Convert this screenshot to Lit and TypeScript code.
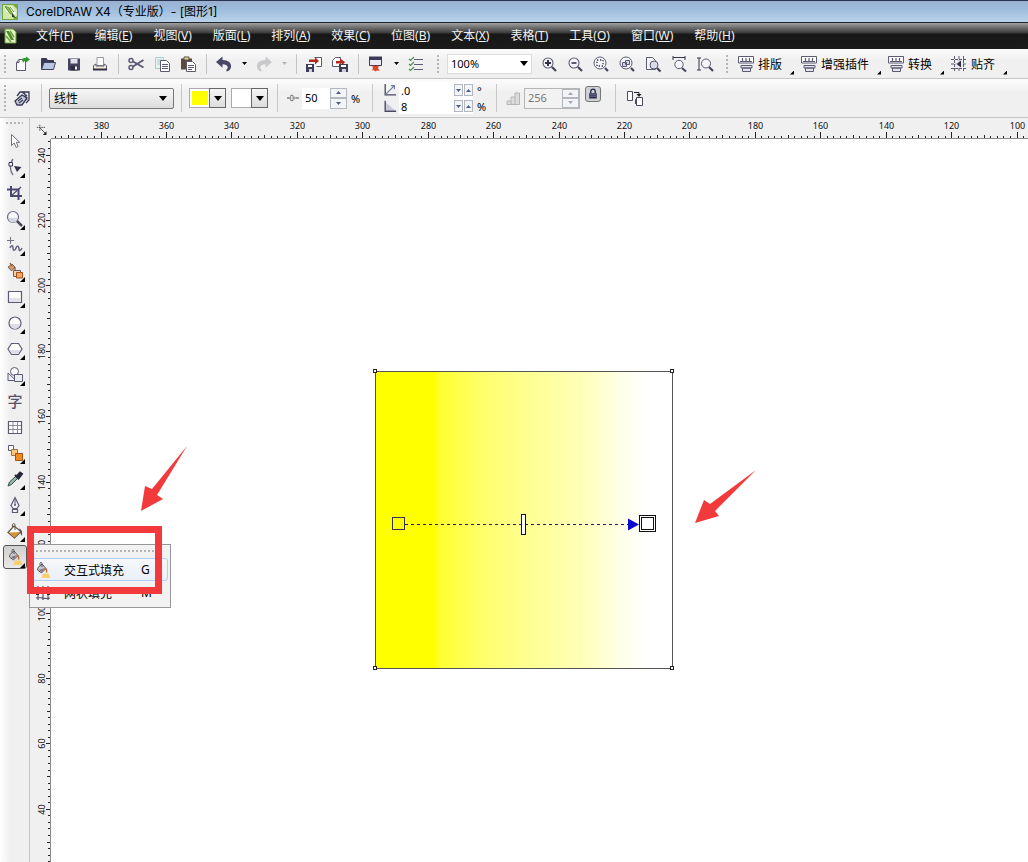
import { LitElement, html, css, svg, TemplateResult } from "lit";
import { customElement } from "lit/decorators.js";
import { classMap } from "lit/directives/class-map.js";

const INK = "#5d5b74";
const DARK = "#33324a";

const lens = svg`<circle cx="7" cy="7" r="5" fill="#f4f5fa" stroke=${INK} stroke-width="1.1"/><path d="M11 11l4 4" stroke="#45435c" stroke-width="2.2"/>`;
const caliper = svg`<path d="M.5 .5h15v6.500H.5z" fill="#fff" stroke=${INK}/><path d="M2 5.500h12M4.500 2v3M8 2v3M11.500 2v3" stroke=${INK} stroke-width="1.200"/><path d="M3 9.500h11v2.500H3zM4.500 12h8v3.500h-8z" fill="#e4e3ee" stroke=${INK}/>`;
const pour = svg`<path d="M3 5.500L7 2l4 4.500L6.500 11 2.500 8z" fill="#c9c7cc" stroke="#5b5560"/><path d="M4 8l6-2-3.500 4z" fill="#77737d"/><path d="M5 3.500V1.500c0-1.500 2-1.500 2 0V5" stroke="#5b5560" fill="none"/><path d="M9.500 7c2-.5 2.500 1 2 3.500" stroke="#c4682a" stroke-width="1.500" fill="none"/><path d="M8 11.500h5.500l2 4.500H6.500z" fill="#fbcf6d"/>`;

const icons: Record<string, TemplateResult> = {
  logo: svg`<path d="M0 0h16v16H0z" fill="#6fa83a"/><path d="M1 1h10l4 4v7l-4 3H1z" fill="#d5e8ac"/><path d="M2 2l8 1 4 7-4 1-6-4z" fill="#fff"/><path d="M3 2.500l4 1 4 7-3-1zM8 3l4 5" stroke="#5b9b2b" fill="#8cc056"/><path d="M10 9l4 5-4-1z" fill="#24421a"/>`,
  doclogo: svg`<path d="M3 1h8l3 3v11H3z" fill="#e3f0c6" stroke="#6d9c3b"/><path d="M4 3l3 0 5 9-3 0z" fill="#4c8a2b"/><path d="M8 3l4 6M4 8l5 6" stroke="#6ba537" stroke-width="1.500"/>`,
  new: svg`<path d="M2.500 6.500L5 3.500h6.500v11h-9z" fill="#fbfbfd" stroke=${INK}/><path d="M2.500 6.500H5v-3" fill="none" stroke=${INK}/><path d="M8 4.500c0-2 1-2.500 4-2.500V.5L16 3.500 12 6.500V5c-2 0-2.500.5-2.500 2z" fill="#2f9a2c"/>`,
  open: svg`<path d="M1.500 13.500v-11h5l1 2h6v2" fill="#3a3854" stroke="#3a3854"/><path d="M1.500 13.500l2.500-7h11.500l-2 7z" fill="#b9c8e0" stroke="#3f4263"/>`,
  save: svg`<path d="M2 2.500h12v12H2z" fill="#45435f"/><path d="M4.500 3h7v4.500h-7z" fill="#dfe2ee"/><path d="M4.500 10h7v4.500h-7z" fill="#2c2a40"/><path d="M9 10.500h2v3H9z" fill="#fff"/>`,
  print: svg`<path d="M5 1.500h6.500v8H5z" fill="#fff" stroke="#9a9aa6"/><path d="M1.500 9.500L4 8v2h8V8l2.500 1.500v4h-13z" fill="#f2ead0" stroke=${INK}/><path d="M1 13.500h14" stroke="#33324a" stroke-width="2"/>`,
  cut: svg`<circle cx="3" cy="4.500" r="2" fill="none" stroke=${INK} stroke-width="1.500"/><circle cx="3" cy="11.500" r="2" fill="none" stroke=${INK} stroke-width="1.500"/><path d="M5 5.500l10.500 6M5 10.500l10.500-6.500" stroke=${INK} stroke-width="2"/>`,
  copy: svg`<path d="M1.500 1.500h8v11h-8z" fill="#e6f3f1" stroke="#a8cfcb"/><path d="M3 4h5M3 6h5M3 8h5" stroke="#a8cfcb"/><path d="M6.500 4.500h6l3 3v8h-9z" fill="#fff" stroke=${INK}/><path d="M8 8.500h6M8 10.500h6M8 12.500h6" stroke=${INK}/>`,
  paste: svg`<path d="M1 2.500h11v11H1z" fill="#5c4a3c"/><path d="M4 1h5v3H4z" fill="#e6d9a8" stroke="#5c4a3c"/><path d="M6.500 5.500h6l3 3v7h-9z" fill="#fff" stroke=${INK}/><path d="M8 9.500h6M8 11.500h6M8 13.500h4" stroke=${INK}/>`,
  undo: svg`<path d="M0 6l6.500-5.500V4c6 0 9 3 8.500 7-.300 2.500-2 4-4.500 4.500v-2c2-1 2.200-5-4-5.200v3.400z" fill="#48476a"/>`,
  redo: svg`<path d="M16 6L9.500 .5V4C3.500 4 .5 7 1 11c.300 2.500 2 4 4.500 4.500v-2c-2-1-2.200-5 4-5.200v3.400z" fill="#c9c9cc"/>`,
  import: svg`<path d="M8.500 1.500h7v9h-5" fill="#fff" stroke=${INK}/><path d="M3 5V3.500h6V1l4 4-4 3.500V6H3z" fill="#b5281e"/><path d="M0 8h8v8H0z" fill="#3f3d58"/><path d="M2 9h4v2H2z" fill="#fff"/><path d="M3 13h3v3H3z" fill="#cfd0dd"/>`,
  export: svg`<path d="M.5 4.500l3-3h5v9h-8z" fill="#fff" stroke=${INK}/><path d="M4 5h4V2.500L13 6l-3 4V7.500H4z" fill="#b5281e"/><path d="M7 8h9v8H7z" fill="#3f3d58"/><path d="M9 9h5v2H9z" fill="#fff"/><path d="M10 13h4v3h-4z" fill="#cfd0dd"/>`,
  launch: svg`<path d="M1.500 1.500h12v8h-12z" fill="#e9eaf2" stroke="#3c3a5a"/><path d="M1 .5h13v3.500H1z" fill="#3c3a5a"/><path d="M4 9.500l3.500.5 3.500-.5-1 2.500 1.500 3-2.500-.5-2 1-1-1.500-2 .5 1-2.500z" fill="#dd4526"/>`,
  checklist: svg`<path d="M6 3.500h9M6 8.500h9M6 13.500h9" stroke=${INK} stroke-width="1.200"/><path d="M1 3l1.500 1.500L6 1M1 8l1.500 1.500L6 6M1 13l1.500 1.500L6 11" stroke="#4d9150" stroke-width="1.200" fill="none"/>`,
  zoomin: svg`${lens}<path d="M4 7h6M7 4v6" stroke="#33324a" stroke-width="2"/>`,
  zoomout: svg`${lens}<path d="M4.500 7h5" stroke=${INK} stroke-width="2"/>`,
  zoomsel: svg`<circle cx="7" cy="7" r="6" fill="#f4f5fa" stroke=${INK}/><path d="M12 12l3 3" stroke="#45435c" stroke-width="2.200"/><rect x="4" y="4" width="6" height="6" fill="none" stroke="#33324a" stroke-width="1.300" stroke-dasharray="1.300 1.700"/>`,
  zoomall: svg`<circle cx="7" cy="7" r="6" fill="#f4f5fa" stroke=${INK}/><path d="M12 12l3 3" stroke="#45435c" stroke-width="2.200"/><path d="M3.500 6.500h4v4h-4zM6.500 4.500h4v4h-4z" fill="#d5d6e6" stroke=${INK}/>`,
  zoompage: svg`<path d="M1.500 1.500h6l3 3v9h-9z" fill="#f4f5fa" stroke=${INK}/><circle cx="9" cy="9" r="4" fill="#d9dbe8" stroke=${INK}/><path d="M12 12l3.500 3.500" stroke="#45435c" stroke-width="2.200"/>`,
  zoomwidth: svg`<path d="M2 1.500h12M2 0v4M14 0v4" stroke="#33324a"/><circle cx="8" cy="8.500" r="4.200" fill="#f4f5fa" stroke=${INK}/><path d="M11 12l4 3.500" stroke="#45435c" stroke-width="2"/>`,
  zoomheight: svg`<path d="M2 2v12M0 2h4M0 14h4" stroke="#33324a"/><circle cx="9" cy="7.500" r="4.500" fill="#f4f5fa" stroke=${INK}/><path d="M12 11l4 4" stroke="#45435c" stroke-width="2.200"/>`,
  caliper,
  snap: svg`<path d="M0 3.500h16M0 8h16M0 12.500h16M3.500 0v16M12.500 0v16M8 0v16" stroke="#5d5b74" stroke-dasharray="3 1"/><path d="M4.500 4.500h7v7h-7z" fill="#e8e8f1"/><path d="M10 4.500v7L5.500 8z" fill="#33324a"/>`,
  fillprops: svg`<path d="M3 6l3-4h9v8l-3 3" fill="#e6e7f1" stroke="#3b3a55" stroke-width="1.300"/><path d="M1 11l7-6 5 3-5 7H3z" fill="#c6c9dc" stroke="#3b3a55" stroke-width="1.300"/><path d="M4 11l4-3M5 13l4-3M8 2l5 4M10 2l3 8" stroke="#3b3a55" stroke-width="1.100"/>`,
  mid: svg`<path d="M0 8h4M11 8h5" stroke="#444" stroke-width="1.300"/><path d="M5 4.500h3v7H5zM9.500 6v4" stroke="#555" fill="#fff"/>`,
  angle: svg`<path d="M2.500 1v12.500H15" stroke="#4a4960" fill="none" stroke-width="1.500"/><path d="M3 13L13 3M13 7V3H9" stroke="#6a7a9a" fill="none" stroke-width="1.300"/>`,
  pad: svg`<path d="M2 3l12 10H2z" fill="#c9c9da"/><path d="M2.500 2v12H15" stroke="#4a4960" fill="none" stroke-width="1.500"/>`,
  steps: svg`<path d="M2 14.500V11h4V7h4V3h4.500v11.500z" fill="#dcdcdc" stroke="#b5b5b5"/><path d="M6 11v3M10 7v7" stroke="#b5b5b5"/>`,
  lock: svg`<path d="M5 7V4.500a3 3 0 0 1 6 0V7" fill="none" stroke="#2b2a48" stroke-width="1.800"/><path d="M3 7h10v7H3z" fill="#2b2a48"/><path d="M4 9h8M4 11h8" stroke="#8584a6"/>`,
  copyfill: svg`<path d="M.5 1.500h5v9h-5zM9.500 7.500h6v8h-6z" fill="#fff" stroke="#4a4960"/><path d="M7 2.500h5v3" fill="none" stroke="#222"/><path d="M9.500 4h5L12 7z" fill="#222"/><path d="M8.500 14v-4.500h1" stroke="#4a4960" fill="none"/>`,
  origin: svg`<path d="M5 1v9M1 4.500h12" stroke="#222" stroke-dasharray="2 1"/><path d="M5 5l7 7" stroke="#222"/><path d="M14 9.500v5H9z" fill="#222"/>`,
  pick: svg`<path d="M4.500 1.500v11l2.700-2.500 2 4.500 2-1-2-4.200h3.500z" fill="#fff" stroke="#74727f"/>`,
  shape: svg`<path d="M6 0C2 5 3 12 6 16" fill="none" stroke="#77758c" stroke-width="1.300"/><path d="M2 3.500h3.500V7H2z" fill="#fff" stroke=${DARK}/><path d="M7 7l7.500 1-4.500 5z" fill="#33324a"/>`,
  crop: svg`<path d="M4 1v10h11M0 4.500h11.500V15" fill="none" stroke="#4a4870" stroke-width="2"/><path d="M4 11L14 2" stroke="#4a4870" stroke-width="1.200"/>`,
  zoom: svg`<circle cx="6" cy="6" r="5.500" fill="#f6f7fb" stroke="#6b6980" stroke-width="1.200"/><path d="M1.500 7h9a4.500 4.500 0 0 1-9 0z" fill="#d3d5e2"/><path d="M10 10l5 5" stroke="#4c4a5e" stroke-width="2.500"/>`,
  freehand: svg`<path d="M3.500 0v7M0 3.500h7" stroke="#74727f"/><path d="M3 11c1-3 3-3 3 0s2 3 3 0 3-2 3 1 2 1 3-1" fill="none" stroke="#615f78" stroke-width="1.400"/>`,
  smart: svg`<path d="M1 4l4-3 3 3-3.500 4z" fill="#d69563" stroke="#7c6659"/><path d="M3 0l2 3M8 4v3" stroke="#8a5a38" stroke-width="1.300"/><path d="M6.500 7.500h7v6h-7z" fill="#f6d0a6" stroke=${INK}/><path d="M9.500 9.500h6v5.500h-6z" fill="#f7a75c" stroke="#a34f1d"/>`,
  rect: svg`<path d="M1.500 2.500h13v11h-13z" fill="#fdfdfe" stroke=${INK} stroke-width="1.200"/><path d="M2 9h12v4H2z" fill="#e1e2ec"/>`,
  ellipse: svg`<circle cx="8" cy="8" r="6" fill="#fdfdfe" stroke=${INK} stroke-width="1.200"/><path d="M3 9h10a5 5 0 0 1-10 0z" fill="#dcdde9"/>`,
  polygon: svg`<path d="M4.500 2.500h7L15 8l-3.500 5.500h-7L1 8z" fill="#fdfdfe" stroke=${INK} stroke-width="1.200"/><path d="M2.500 9h11l-2.300 3.800H4.800z" fill="#dcdde9"/>`,
  basic: svg`<path d="M1 6l8 7.500H1z" fill="#eceef5" stroke=${INK}/><circle cx="7.500" cy="4.500" r="4" fill="#f9f9fc" stroke=${INK}/><path d="M7.500 7.500h8v7h-8z" fill="#eceef5" stroke=${INK}/>`,
  table: svg`<path d="M1.500 2.500h13v12h-13z" fill="#fff" stroke=${INK} stroke-width="1.200"/><path d="M2 6.500h12M2 10.500h12M6 3v11M10.500 3v11" stroke="#8b8aa0"/>`,
  blend: svg`<path d="M1.500 .5h5v5h-5z" fill="#fff" stroke=${INK}/><path d="M4.500 4.500h6v6h-6z" fill="#fbc879" stroke="#9c7546"/><path d="M8.500 8.500h7v7h-7z" fill="#f28a1c" stroke="#a05313"/>`,
  dropper: svg`<path d="M1 15l1.500-4L9 5l2 2-6.500 6.500z" fill="#93b3a6" stroke="#33504a"/><path d="M8 4l4 4M9.500 5.500L13 1.500l2 1.500-3.500 4.500z" stroke="#26253a" stroke-width="2" fill="#26253a"/>`,
  outline: svg`<path d="M8 .5l4 8-2 3H6l-2-3zM5.500 12.500h5v3h-5z" fill="#f2f3f8" stroke=${INK} stroke-width="1.200"/><path d="M8 2v6" stroke=${INK}/><circle cx="8" cy="8" r="1" fill=${INK}/>`,
  fill: svg`<path d="M1 9.500L7 3l7 5.500L7.500 15z" fill="#fff" stroke="#5d5548" stroke-width="1.200"/><path d="M2 9.500l11-.5-5.500 5.500z" fill="#d9942f"/><path d="M5.500 4.500V2c0-2 2.500-2 2.500 0v5" stroke="#5d5548" fill="none"/><path d="M12 5.500c3 1 3.500 4 3 7.500-2-2-2-5-3-7.500z" fill="#55505c"/>`,
  ifill: pour,
  mesh: svg`<path d="M1 3c4-2 8 2 14 0M1 8c4-2 8 2 14 0M1 13c4-2 8 2 14 0M3 1v14M8 1v14M13 1v14" fill="none" stroke="#55546a" stroke-width="1.200"/><path d="M1 7h3v3H1zM7 6h3v3H7zM12 7h3v3h-3z" fill="#333"/>`,
};

const icon = (name: string) =>
  html`<svg class="icon" viewBox="0 0 16 16" aria-hidden="true">${icons[name]}</svg>`;

const baseStyles = css`
  * { box-sizing: border-box; }
  button, select, input {
    font: inherit; color: inherit; margin: 0; padding: 0; border: 0;
    background: none; border-radius: 0; outline: 0; min-width: 0;
  }
  .icon { width: 16px; height: 16px; display: block; flex: none; overflow: visible; }
  .grip { flex: none; background: repeating-linear-gradient(#b4b4b4 0 2px, transparent 2px 4px) center / 2px 100% no-repeat; }
`;

@customElement("menu-bar")
export class MenuBar extends LitElement {
  static styles = [baseStyles, css`
    :host { display: block; color: #f2f2f2; }
    .bar { display: flex; align-items: center; height: 26px; padding-left: 2px; background: linear-gradient(#a0a0a0, #6a6a6a 5px, #3a3a3a 10px, #171717 11px, #1b1b1b); }
    .list { display: flex; gap: 1px; margin-left: 8px; }
    .entry { padding: 0 10px; font-size: 12px; line-height: 20px; white-space: nowrap; }
    .key { text-decoration: underline; }
  `];
  private entries = [
    ["文件", "F"], ["编辑", "E"], ["视图", "V"], ["版面", "L"], ["排列", "A"], ["效果", "C"],
    ["位图", "B"], ["文本", "X"], ["表格", "T"], ["工具", "O"], ["窗口", "W"], ["帮助", "H"],
  ];
  render() {
    return html`<nav class="bar">${icon("doclogo")}
      <div class="list">${this.entries.map(([t, k]) => html`<button class="entry">${t}(<span class="key">${k}</span>)</button>`)}</div>
    </nav>`;
  }
}

@customElement("standard-bar")
export class StandardBar extends LitElement {
  static styles = [baseStyles, css`
    :host { display: block; overflow: hidden; }
    .bar { display: flex; align-items: center; height: 30px; border-bottom: 1px solid #c6c6c6; background: linear-gradient(#fbfbfb, #f0f0f0 12px, #f0f0f0); }
    .grip { width: 9px; height: 18px; }
    .grip.mid { width: 18px; }
    .sep { width: 10px; height: 20px; flex: none; background: linear-gradient(#c4c4c4, #c4c4c4) 5px 0 / 1px 100% no-repeat; }
    .tool { width: 26px; height: 26px; display: grid; place-items: center; flex: none; }
    .drop { width: 14px; height: 26px; display: grid; place-items: center; flex: none; }
    .drop svg { width: 5px; height: 3px; display: block; }
    .drop.off { color: #b5b5b5; }
    .zoom { display: grid; grid-template-columns: 1fr 16px; align-items: center; width: 85px; height: 20px; margin-right: 4px; background: #fff; border: 1px solid #dcdcdc; font-size: 11px; }
    .zoom select { grid-area: 1 / 1 / 2 / 3; appearance: none; padding-left: 3px; height: 18px; }
    .zoom svg { grid-area: 1 / 2; justify-self: end; margin-right: 3px; width: 8px; height: 5px; pointer-events: none; }
    .text { position: relative; display: flex; align-items: center; gap: 4px; height: 26px; padding: 0 17px 0 2px; font-size: 12px; white-space: nowrap; }
    .text::after { content: ""; position: absolute; right: 5px; bottom: 2px; width: 4px; height: 4px; background: #000; clip-path: polygon(100% 0, 100% 100%, 0 100%); }
  `];
  private tools(list: [string, string][]) {
    return list.map(([n, l]) => html`<button class="tool" aria-label=${l}>${icon(n)}</button>`);
  }
  private drop(label: string, off = false) {
    return html`<button class=${classMap({ drop: true, off })} aria-label=${label}><svg viewBox="0 0 5 3"><path d="M0 0h5L2.500 3z" fill="currentColor"/></svg></button>`;
  }
  render() {
    return html`<div class="bar">
      <span class="grip"></span>
      ${this.tools([["new", "新建"], ["open", "打开"], ["save", "保存"], ["print", "打印"]])}
      <span class="sep"></span>
      ${this.tools([["cut", "剪切"], ["copy", "复制"], ["paste", "粘贴"]])}
      <span class="sep"></span>
      ${this.tools([["undo", "撤消"]])}${this.drop("撤消列表")}
      ${this.tools([["redo", "重做"]])}${this.drop("重做列表", true)}
      <span class="sep"></span>
      ${this.tools([["import", "导入"], ["export", "导出"]])}
      <span class="sep"></span>
      ${this.tools([["launch", "应用程序启动器"]])}${this.drop("应用程序列表")}
      ${this.tools([["checklist", "选项"]])}
      <span class="grip mid"></span>
      <div class="zoom"><select aria-label="缩放级别"><option>100%</option></select><svg viewBox="0 0 8 5"><path d="M0 0h8L4 5z"/></svg></div>
      ${this.tools([["zoomin", "放大"], ["zoomout", "缩小"], ["zoomsel", "缩放选定"], ["zoomall", "缩放全部"], ["zoompage", "缩放页面"], ["zoomwidth", "按页宽"], ["zoomheight", "按页高"]])}
      <span class="grip mid"></span>
      <button class="text">${icon("caliper")}排版</button>
      <button class="text">${icon("caliper")}增强插件</button>
      <button class="text">${icon("caliper")}转换</button>
      <button class="text">${icon("snap")}贴齐</button>
    </div>`;
  }
}

@customElement("property-bar")
export class PropertyBar extends LitElement {
  static styles = [baseStyles, css`
    :host { display: block; overflow: hidden; }
    .bar { display: flex; align-items: center; height: 39px; font-size: 11px; border-bottom: 1px solid #c6c6c6; background: linear-gradient(#fcfcfc, #f0f0f0 14px, #f0f0f0); }
    .grip { width: 10px; height: 26px; }
    .sep { width: 1px; height: 28px; margin: 0 7px; flex: none; background: #c8c8c8; }
    .tool { width: 24px; height: 26px; display: grid; place-items: center; flex: none; }
    .type { display: grid; grid-template-columns: 1fr 14px; align-items: center; width: 125px; height: 21px; font-size: 12px; border: 1px solid #777; border-radius: 2px; background: linear-gradient(#f6f6f6, #ebebeb 50%, #dcdcdc); }
    .type select { grid-area: 1 / 1 / 2 / 3; appearance: none; padding-left: 4px; height: 19px; }
    .type svg { grid-area: 1 / 2; width: 8px; height: 5px; pointer-events: none; }
    .colours { display: flex; gap: 5px; margin-right: 2px; }
    .colour { display: flex; width: 37px; height: 20px; border: 1px solid #aaa; background: #fff; }
    .swatch { flex: 1; margin: 2px; }
    .swatch.yellow { background: #ffff00; }
    .pull { width: 17px; height: 20px; margin: -1px; display: grid; place-items: center; border: 1px solid #666; background: linear-gradient(#f5f5f5, #ddd); }
    .pull svg { width: 8px; height: 5px; }
    .group { display: flex; align-items: center; gap: 3px; margin: 0 1px; }
    .slide { width: 12px; height: 12px; margin-left: 1px; }
    .num { display: flex; width: 45px; height: 21px; background: #fff; }
    .num input { flex: 1; width: 0; padding: 0 0 2px 3px; }
    .spin { display: flex; flex-direction: column; width: 17px; }
    .spin button, .pair button { display: grid; place-items: center; border: 1px solid #b2b7c0; background: #f3f4f6; }
    .spin button { flex: 1; }
    .spin svg, .pair svg { width: 5px; height: 3px; display: block; }
    .num.off { width: 56px; background: #f2f2f2; border: 1px solid #b5b5b5; color: #777; }
    .num.off svg { opacity: 0.5; }
    .unit { width: 14px; padding-left: 1px; }
    .stack { display: grid; grid-template-rows: 16px 16px; padding-left: 3px; }
    .row { display: flex; align-items: center; gap: 2px; }
    .row .icon { width: 14px; height: 14px; }
    .pair { display: flex; width: 74px; height: 16px; gap: 1px; align-items: center; background: #fff; }
    .pair input { flex: 1; width: 0; padding-left: 2px; }
    .pair button { width: 9px; height: 12px; }
    .row .unit { padding-left: 2px; }
    .lock { width: 16px; height: 16px; margin: 0 6px 8px 3px; border: 1px solid #777; border-radius: 3px; background: #cfd0d6; display: grid; place-items: center; }
    .lock .icon { width: 12px; height: 12px; }
  `];
  private up = html`<svg viewBox="0 0 5 3"><path d="M0 3h5L2.500 0z" fill="#4b5c87"/></svg>`;
  private down = html`<svg viewBox="0 0 5 3"><path d="M0 0h5L2.500 3z" fill="#4b5c87"/></svg>`;
  private arrow = html`<svg viewBox="0 0 8 5"><path d="M0 0h8L4 5z"/></svg>`;
  private num(value: string, label: string, off = false) {
    return html`<div class=${classMap({ num: true, off })}><input aria-label=${label} .value=${value} ?disabled=${off}><span class="spin"><button aria-label="增加">${this.up}</button><button aria-label="减少">${this.down}</button></span></div>`;
  }
  private pair(name: string, value: string, unit: string, label: string) {
    return html`<div class="row">${icon(name)}<div class="pair"><input aria-label=${label} .value=${value}><button aria-label="减少">${this.down}</button><button aria-label="增加">${this.up}</button></div><span class="unit">${unit}</span></div>`;
  }
  render() {
    return html`<div class="bar">
      <span class="grip"></span>
      <button class="tool" aria-label="编辑填充">${icon("fillprops")}</button>
      <span class="sep"></span>
      <div class="type"><select aria-label="填充类型"><option>线性</option></select>${this.arrow}</div>
      <span class="sep"></span>
      <div class="colours">
        <div class="colour"><span class="swatch yellow"></span><button class="pull" aria-label="起始颜色">${this.arrow}</button></div>
        <div class="colour"><span class="swatch"></span><button class="pull" aria-label="结束颜色">${this.arrow}</button></div>
      </div>
      <span class="sep"></span>
      <div class="group"><svg class="icon slide" viewBox="0 0 16 16">${icons.mid}</svg>${this.num("50", "中点")}<span class="unit">%</span></div>
      <span class="sep"></span>
      <div class="stack">${this.pair("angle", ".0", "°", "角度")}${this.pair("pad", "8", "%", "边界")}</div>
      <span class="sep"></span>
      <div class="group">${icon("steps")}${this.num("256", "步长", true)}</div>
      <div class="group"><button class="lock" aria-label="锁定步长">${icon("lock")}</button></div>
      <span class="sep"></span>
      <button class="tool" aria-label="复制填充属性">${icon("copyfill")}</button>
    </div>`;
  }
}

@customElement("tool-box")
export class ToolBox extends LitElement {
  static styles = [baseStyles, css`
    :host { display: block; position: relative; z-index: 2; width: 30px; border-right: 1px solid #c3c3c3; background: linear-gradient(90deg, #fff, #efefef 10px, #f0f0f0); }
    .grip, .dots { background: repeating-linear-gradient(90deg, #b4b4b4 0 2px, transparent 2px 4px) center / 100% 2px no-repeat; }
    .grip { height: 10px; margin: 0 6px; }
    .slot { position: relative; height: 26px; padding: 1px 3px; }
    .tool { position: relative; display: grid; place-items: center; width: 24px; height: 24px; border: 1px solid transparent; border-radius: 3px; }
    .tool.on { border-color: #555; background: linear-gradient(#cfcfcf, #e9e9e9); }
    .tool.more::after { content: ""; position: absolute; right: 1px; bottom: 0; width: 5px; height: 5px; background: #000; clip-path: polygon(100% 0, 100% 100%, 0 100%); }
    .glyph { font-size: 15px; line-height: 16px; font-weight: 500; color: #55536c; }
    .flyout { position: absolute; left: 29px; top: 0; width: 142px; padding: 2px 2px 3px; border: 1px solid #979797; background: #f2f2f2; }
    .dots { height: 7px; margin: 0 4px; }
    .item { display: grid; grid-template-columns: 29px 1fr 26px; align-items: center; width: 100%; height: 23px; padding-left: 2px; font-size: 12px; text-align: left; white-space: nowrap; border: 1px solid transparent; }
    .item.hot { margin-top: 4px; border-color: #aecff7; border-radius: 3px; background: linear-gradient(#f6f8fb, #eaf0f8); }
    .frame { position: absolute; left: 27px; top: -18px; width: 135px; height: 68px; border: 7px solid #f23a3c; pointer-events: none; }
  `];
  private tools: [string, string, boolean][] = [
    ["pick", "挑选", false], ["shape", "形状", true], ["crop", "裁剪", true], ["zoom", "缩放", true],
    ["freehand", "手绘", true], ["smart", "智能填充", true], ["rect", "矩形", true], ["ellipse", "椭圆形", true],
    ["polygon", "多边形", true], ["basic", "基本形状", true], ["text", "文本", false], ["table", "表格", false],
    ["blend", "交互式调和", true], ["dropper", "滴管", true], ["outline", "轮廓", true], ["fill", "填充", true],
    ["ifill", "交互式填充", true],
  ];
  render() {
    return html`<div class="grip"></div>
      ${this.tools.map(([n, label, more]) => {
        const on = n === "ifill";
        return html`<div class="slot">
          <button class=${classMap({ tool: true, more, on })} aria-label=${label}>${n === "text" ? html`<span class="glyph">字</span>` : icon(n)}</button>
          ${on ? html`<div class="flyout"><div class="dots"></div>
            <button class="item hot">${icon("ifill")}<span>交互式填充</span><span>G</span></button>
            <button class="item">${icon("mesh")}<span>网状填充</span><span>M</span></button>
          </div><div class="frame"></div>` : ""}
        </div>`;
      })}`;
  }
}

const PITCH = 65.43;

@customElement("ruler-strip")
export class RulerStrip extends LitElement {
  static properties = { vertical: { type: Boolean }, first: { type: Number }, start: { type: Number }, extent: { state: true } };
  declare vertical: boolean;
  declare first: number;
  declare start: number;
  declare extent: number;
  static styles = [baseStyles, css`
    :host { display: block; overflow: hidden; background: #f0f0f0; min-width: 0; min-height: 0; border-bottom: 1px solid #8a8a8a; }
    :host([vertical]) { border-bottom: 0; border-right: 1px solid #8a8a8a; }
    .scale { display: block; width: 100%; height: 100%; }
    .label { font-size: 9px; text-anchor: middle; fill: #111; }
    .tick { stroke: #222; shape-rendering: crispEdges; }
  `];
  private observer = new ResizeObserver(() => this.measure());
  constructor() {
    super();
    this.extent = 0;
  }
  private measure() {
    this.extent = this.vertical ? this.clientHeight : this.clientWidth;
  }
  connectedCallback() {
    super.connectedCallback();
    this.observer.observe(this);
  }
  disconnectedCallback() {
    super.disconnectedCallback();
    this.observer.disconnect();
  }
  render() {
    const marks: TemplateResult[] = [];
    for (let i = -9; ; i++) {
      const p = Math.floor(this.start + (i * PITCH) / 10) + 0.5;
      if (p > this.extent) break;
      if (p < 0) continue;
      const major = i % 10 === 0;
      const len = major ? (this.vertical ? 4 : 6) : i % 5 === 0 ? 3 : 2;
      marks.push(this.vertical
        ? svg`<path class="tick" d=${`M${20 - len} ${p}H20`}/>`
        : svg`<path class="tick" d=${`M${p} ${20 - len}V20`}/>`);
      const value = this.first - i * 2;
      if (major && value >= 0 && p + 9 < this.extent) {
        marks.push(this.vertical
          ? svg`<text class="label" transform=${`translate(15 ${p}) rotate(-90)`}>${value}</text>`
          : svg`<text class="label" x=${p} y="11">${value}</text>`);
      }
    }
    return html`<svg class="scale" aria-hidden="true">${marks}</svg>`;
  }
}

@customElement("drawing-page")
export class DrawingPage extends LitElement {
  static styles = [baseStyles, css`
    :host { display: block; overflow: hidden; background: #fff; min-width: 0; min-height: 0; }
    .page { display: block; width: 100%; height: 100%; }
    .crisp { shape-rendering: crispEdges; }
  `];
  render() {
    return html`<svg class="page" role="img" aria-label="绘图页面">
      <defs><linearGradient id="fade">
        <stop offset="0" stop-color="#ffff00"/><stop offset=".2" stop-color="#ffff00"/>
        <stop offset=".21" stop-color="#ffff2c"/><stop offset=".35" stop-color="#ffff68"/>
        <stop offset=".5" stop-color="#ffff8f"/><stop offset=".7" stop-color="#ffffba"/>
        <stop offset=".84" stop-color="#ffffec"/><stop offset=".91" stop-color="#ffffff"/>
      </linearGradient></defs>
      <g transform="translate(-51 -139)">
        <g class="crisp">
          <rect x="375.500" y="371.500" width="297" height="297" fill="url(#fade)" stroke="#555"/>
          ${[[373, 369], [670, 369], [373, 666], [670, 666]].map(([x, y]) => svg`<rect x=${x + 0.5} y=${y + 0.5} width="3" height="3" fill="#fff" stroke="#222"/>`)}
          <path d="M405 524.500H628" stroke="#1a1a80" stroke-dasharray="3 3"/>
          <rect x="392.500" y="517.500" width="12" height="12" fill="none" stroke="#333360"/>
          <rect x="521.500" y="514.500" width="4" height="20" fill="#fff" stroke="#111"/>
          <rect x="639.500" y="515.500" width="16" height="16" fill="#fff" stroke="#111"/>
          <rect x="641.500" y="517.500" width="12" height="12" fill="#fff" stroke="#111"/>
        </g>
        <path d="M628 518.500v12l11-6z" fill="#0a0ad0"/>
        <path d="M187 446L152 489L145 486L141 511L163 499L157 495Z" fill="#f23a3c"/>
        <path d="M756 470L710 504L704 500L695 523L719 516L715 511Z" fill="#f23a3c"/>
      </g>
    </svg>`;
  }
}

@customElement("app-root")
export class AppRoot extends LitElement {
  static styles = [baseStyles, css`
    :host { display: flex; flex-direction: column; height: 100vh; overflow: hidden; background: #f0f0f0; color: #000; font-family: "Noto Sans", "Noto Sans CJK SC", sans-serif; }
    .title { display: flex; align-items: center; gap: 8px; height: 23px; padding-left: 2px; flex: none; border-top: 1px solid #26344f; border-bottom: 1px solid #20242c; background: linear-gradient(#9ab0d0, #9dbcdd 8px, #b9d2ea); white-space: nowrap; }
    .name { margin: 0; font-family: "Inter", "Noto Sans CJK SC", sans-serif; font-size: 12px; font-weight: 400; line-height: 18px; }
    .work { display: grid; grid-template-columns: auto 1fr; flex: 1; min-height: 0; }
    .desk { display: grid; grid-template-columns: 21px 1fr; grid-template-rows: 21px 1fr; min-width: 0; min-height: 0; }
    .corner { display: grid; place-items: end; padding: 3px; }
    .corner .icon { width: 12px; height: 12px; }
  `];
  render() {
    return html`
      <header class="title">${icon("logo")}<h1 class="name">CorelDRAW X4（专业版）- [图形1]</h1></header>
      <menu-bar></menu-bar>
      <standard-bar></standard-bar>
      <property-bar></property-bar>
      <main class="work">
        <tool-box></tool-box>
        <div class="desk">
          <div class="corner">${icon("origin")}</div>
          <ruler-strip .first=${380} .start=${50}></ruler-strip>
          <ruler-strip vertical .first=${240} .start=${16}></ruler-strip>
          <drawing-page></drawing-page>
        </div>
      </main>`;
  }
}
